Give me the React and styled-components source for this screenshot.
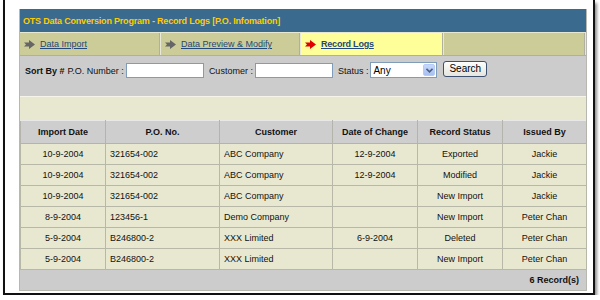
import React from 'react';
import styled, { createGlobalStyle } from 'styled-components';

const Global = createGlobalStyle`
  html, body { margin: 0; padding: 0; background: #ffffff; }
  body { font-family: "Liberation Sans", Arial, sans-serif; font-size: 9px; }
`;

const Frame = styled.div`
  box-sizing: border-box;
  margin-left: 3px;
  width: 592px;
  height: 295px;
  border-left: 2px solid #111;
  border-right: 2px solid #111;
  border-bottom: 2px solid #111;
  box-shadow: 2px 3px 3px rgba(0, 0, 0, 0.45);
  padding: 9px 7px 0 14px;
`;

const Panel = styled.div`
  width: 566px;
  border: 1px solid #b8b8b0;
  border-top: none;
  display: flex;
  flex-direction: column;
`;

const TitleBar = styled.div`
  height: 23px;
  background: #3a6a8e;
  color: #ffcc00;
  font-weight: bold;
  font-size: 9px;
  display: flex;
  align-items: center;
  padding-left: 3px;
  letter-spacing: -0.2px;
`;

const Tabs = styled.div`
  display: grid;
  grid-template-columns: 141px 140px 143px 1fr;
  height: 22px;
  background: #cccc99;
  border-top: 1px solid #e8e8d0;
  border-bottom: 1px solid #b0b0a0;
`;

const Tab = styled.div`
  display: flex;
  align-items: center;
  gap: 5px;
  padding-left: 4px;
  background: ${p => (p.$active ? '#ffff99' : '#cccc99')};
  border-right: 1px solid #e8e8d8;
  box-shadow: inset -1px 0 0 #b0b0a0;
`;

const TabLink = styled.a`
  color: #23487a;
  text-decoration: underline;
  font-size: 9px;
  font-weight: ${p => (p.$active ? 'bold' : 'normal')};
  letter-spacing: ${p => (p.$active ? '-0.2px' : '0')};
`;

const SearchBar = styled.div`
  height: 40px;
  box-sizing: border-box;
  background: #cccccc;
  padding: 5px 0 0 5px;
  display: flex;
  align-items: flex-start;
  font-size: 9px;
  color: #111;
`;

const Label = styled.span`
  margin-top: 5px;
  font-weight: ${p => (p.$bold ? 'bold' : 'normal')};
  margin-right: ${p => p.$mr || 2}px;
`;

const TextInput = styled.input`
  box-sizing: border-box;
  width: ${p => p.$w}px;
  height: 15px;
  margin-top: 2px;
  border: 1px solid #7f9db9;
  background: #fff;
  padding: 0 2px;
  margin-right: 5px;
`;

const SelectWrap = styled.div`
  position: relative;
  width: 67px;
  height: 16px;
  margin-top: 1px;
  margin-right: 6px;
`;

const Select = styled.select`
  appearance: none;
  box-sizing: border-box;
  width: 100%;
  height: 100%;
  border: 1px solid #7f9db9;
  background: #fff;
  font-family: "Liberation Sans", Arial, sans-serif;
  font-size: 10px;
  padding: 0 2px;
  color: #000;
`;

const SelectArrow = styled.div`
  position: absolute;
  top: 2px;
  right: 2px;
  width: 12px;
  height: 12px;
  border-radius: 2px;
  background: linear-gradient(#c6d8fb, #a8c0f0);
  border: 1px solid #b6cbf5;
  box-sizing: border-box;
  display: flex;
  align-items: center;
  justify-content: center;
  pointer-events: none;
`;

const Button = styled.button`
  box-sizing: border-box;
  height: 16px;
  padding: 0 5px;
  border: 1px solid #3c5070;
  border-radius: 3px;
  background: linear-gradient(#fdfdfb, #e6e6de);
  font-family: "Liberation Sans", Arial, sans-serif;
  font-size: 10px;
  color: #000;
  line-height: 12px;
`;

const Spacer = styled.div`
  height: 23px;
  background: #e8e8d0;
  border-top: 1px solid #f4f4e8;
`;

const Table = styled.table`
  width: 100%;
  border-collapse: collapse;
  table-layout: fixed;
  font-size: 9px;
  color: #111;
`;

const Th = styled.th`
  height: 22px;
  background: #cecece;
  font-weight: bold;
  text-align: center;
  border: 1px solid #b4b4ac;
  border-top-color: #e8e8e8;
  padding: 0;
`;

const Td = styled.td`
  height: 20px;
  background: #e8e8d0;
  border: 1px solid #b8b8a8;
  text-align: ${p => (p.$left ? 'left' : 'center')};
  padding: ${p => (p.$left ? '0 0 0 4px' : '0')};
`;

const Footer = styled.div`
  height: 20px;
  background: #cccccc;
  display: flex;
  align-items: center;
  justify-content: flex-end;
  padding-right: 7px;
  font-weight: bold;
  font-size: 9px;
  color: #111;
`;

const Arrow = ({ color }) => (
  <svg width="11" height="9" viewBox="0 0 11 9">
    <polygon points="0,2.5 5,2.5 5,0 11,4.5 5,9 5,6.5 0,6.5 2,4.5" fill={color} />
  </svg>
);

const columns = [
  { title: 'Import Date', width: 85 },
  { title: 'P.O. No.', width: 114, left: true },
  { title: 'Customer', width: 113, left: true },
  { title: 'Date of Change', width: 85 },
  { title: 'Record Status', width: 85 },
  { title: 'Issued By', width: 84 },
];

const rows = [
  ['10-9-2004', '321654-002', 'ABC Company', '12-9-2004', 'Exported', 'Jackie'],
  ['10-9-2004', '321654-002', 'ABC Company', '12-9-2004', 'Modified', 'Jackie'],
  ['10-9-2004', '321654-002', 'ABC Company', '', 'New Import', 'Jackie'],
  ['8-9-2004', '123456-1', 'Demo Company', '', 'New Import', 'Peter Chan'],
  ['5-9-2004', 'B246800-2', 'XXX Limited', '6-9-2004', 'Deleted', 'Peter Chan'],
  ['5-9-2004', 'B246800-2', 'XXX Limited', '', 'New Import', 'Peter Chan'],
];

export default function App() {
  return (
    <>
      <Global />
      <Frame>
        <Panel>
          <TitleBar>OTS Data Conversion Program - Record Logs [P.O. Infomation]</TitleBar>
          <Tabs>
            <Tab>
              <Arrow color="#666" />
              <TabLink href="#">Data Import</TabLink>
            </Tab>
            <Tab>
              <Arrow color="#666" />
              <TabLink href="#">Data Preview &amp; Modify</TabLink>
            </Tab>
            <Tab $active>
              <Arrow color="#e00000" />
              <TabLink href="#" $active>Record Logs</TabLink>
            </Tab>
            <Tab />
          </Tabs>
          <SearchBar>
            <Label $bold $mr={3}>Sort By #</Label>
            <Label>P.O. Number :</Label>
            <TextInput $w={78} />
            <Label>Customer :</Label>
            <TextInput $w={78} />
            <Label>Status :</Label>
            <SelectWrap>
              <Select defaultValue="Any">
                <option>Any</option>
                <option>Exported</option>
                <option>Modified</option>
                <option>New Import</option>
                <option>Deleted</option>
              </Select>
              <SelectArrow>
                <svg width="7" height="5" viewBox="0 0 7 5">
                  <polyline points="0.5,0.8 3.5,3.8 6.5,0.8" fill="none" stroke="#4d6185" strokeWidth="1.6" />
                </svg>
              </SelectArrow>
            </SelectWrap>
            <Button>Search</Button>
          </SearchBar>
          <Spacer />
          <Table>
            <colgroup>
              {columns.map(c => <col key={c.title} style={{ width: c.width }} />)}
            </colgroup>
            <thead>
              <tr>
                {columns.map(c => <Th key={c.title}>{c.title}</Th>)}
              </tr>
            </thead>
            <tbody>
              {rows.map((r, i) => (
                <tr key={i}>
                  {r.map((v, j) => (
                    <Td key={j} $left={columns[j].left}>{v}</Td>
                  ))}
                </tr>
              ))}
            </tbody>
          </Table>
          <Footer>6 Record(s)</Footer>
        </Panel>
      </Frame>
    </>
  );
}
